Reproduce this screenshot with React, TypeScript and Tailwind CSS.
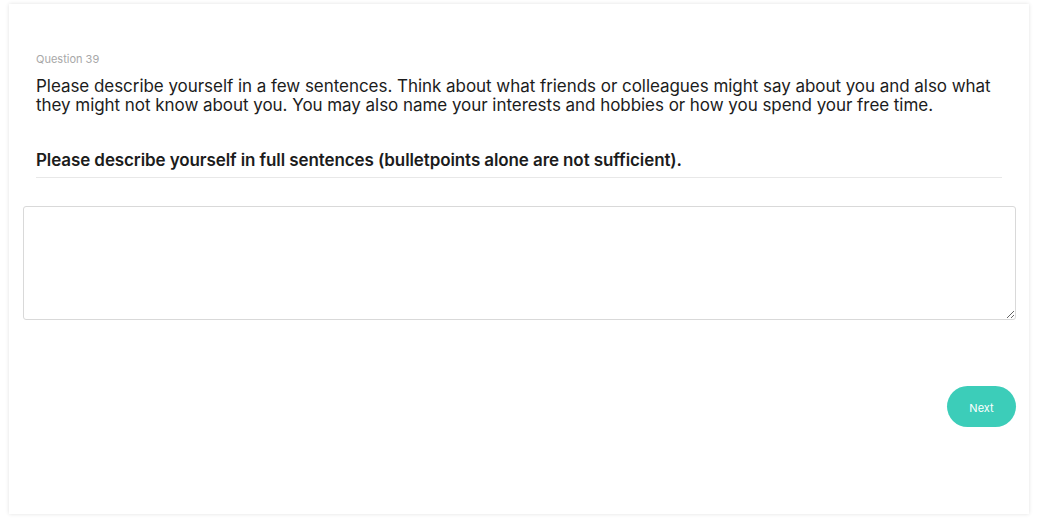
import React from "react";

export default function App() {
  return (
    <div className="min-h-[522px] w-full bg-white pt-[4px] pl-[9px] pr-[10px] pb-[8px]" style={{ fontFamily: "Inter, 'Noto Sans', sans-serif" }}>
      <div className="h-[510px] w-[1020px] bg-white shadow-[0_0_4px_rgba(0,0,0,0.12)] px-[14px] pt-[48px]">
        <div className="px-[13px]">
          <div className="text-[11px] leading-[14px] text-[#a8a8a8]">Question 39</div>
          <p className="mt-[11px] text-[17px] leading-[19px] text-[#1c1c1c] tracking-[-0.045px]">
            Please describe yourself in a few sentences. Think about what friends or colleagues might say about you and also what they might not know about you. You may also name your interests and hobbies or how you spend your free time.
          </p>
          <div className="mt-[35px] pb-[7px] border-b border-[#e8e8e8]">
            <p className="text-[17px] leading-[20px] font-semibold text-[#1c1c1c] tracking-[-0.1px]">
              Please describe yourself in full sentences (bulletpoints alone are not sufficient).
            </p>
          </div>
        </div>
        <textarea className="mt-[28px] block w-[993px] h-[114px] rounded-[3px] border border-[#d9d9d9] bg-white outline-none resize-y" />
        <div className="mt-[66px] flex justify-end mr-[-1px]">
          <button className="h-[41px] w-[69px] rounded-full bg-[#3ccdb9] pt-[3px] text-white text-[11px] font-normal">Next</button>
        </div>
      </div>
    </div>
  );
}
